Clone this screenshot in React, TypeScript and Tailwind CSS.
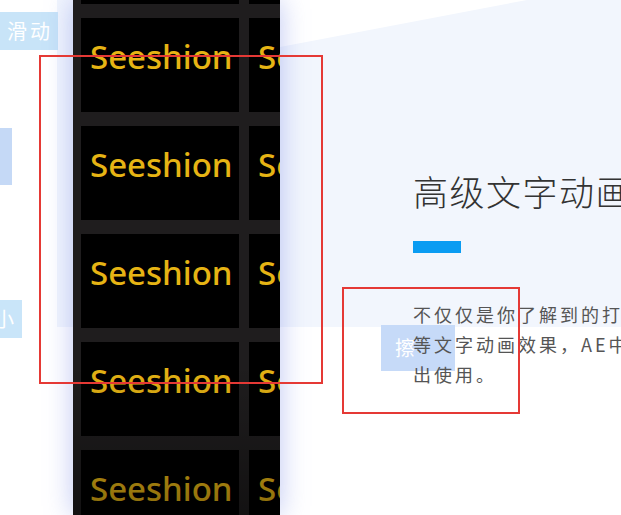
import React from 'react';

const cjk = { fontFamily: '"Noto Sans CJK SC", "Noto Sans", sans-serif' };
const latin = { fontFamily: '"Noto Sans", "Liberation Sans", Arial, sans-serif' };

const rows = [0, 1, 2, 3, 4, 5];

const GridCell: React.FC = () => (
  <div className="h-[94px] bg-black pt-[22px] pl-[9px] whitespace-nowrap">
    <span className="text-[33px] leading-none font-medium text-[#e6b414]" style={latin}>
      Seeshion
    </span>
  </div>
);

const TextGrid: React.FC = () => (
  <div className="relative w-[207px] h-[515px] shrink-0 bg-[#1f1d1e] overflow-hidden shadow-[0_0_26px_rgba(95,115,225,0.4)] z-10">
    <div className="grid grid-cols-[158px_158px] gap-x-[10px] gap-y-[14px] pl-[8px] mt-[-90px]">
      {rows.map((r) => (
        <React.Fragment key={r}>
          <GridCell />
          <GridCell />
        </React.Fragment>
      ))}
    </div>
    <div className="absolute left-0 right-0 bottom-0 h-[150px] bg-gradient-to-b from-transparent to-black/40 pointer-events-none" />
  </div>
);

const App: React.FC = () => {
  return (
    <div className="relative w-[621px] h-[515px] overflow-hidden bg-white" style={cjk}>
      {/* section background */}
      <div className="absolute left-[57px] top-0 w-[564px] h-[327px] bg-[#f2f6fd]" />
      <svg className="absolute left-0 top-0" width="621" height="60">
        <polygon points="280,0 527,0 280,47" fill="#ffffff" />
      </svg>

      <div className="relative flex h-full">
        <div className="w-[73px] shrink-0" />
        <TextGrid />
        <div className="relative flex-1 pl-[133px] pt-[171px] whitespace-nowrap">
          <h2 className="text-[35px] leading-[40px] font-light tracking-[1.5px] text-[#333333]">高级文字动画</h2>
          <div className="w-[48px] h-[12px] bg-[#0a9cf2] mt-[30px]" />
          <div className="absolute left-[101px] top-[325px] w-[74px] h-[46px] bg-[#c6daf8] flex items-center pl-[14px]">
            <span className="text-white text-[20px]">擦</span>
          </div>
          <div className="relative mt-[46px] text-[18px] leading-[30px] tracking-[3px] text-[#555555]">
            <p>不仅仅是你了解到的打字机、淡入淡出</p>
            <p>等文字动画效果，AE中的文字动画都可以导</p>
            <p>出使用。</p>
          </div>
        </div>
      </div>

      {/* floating labels */}
      <div className="absolute left-0 top-[12px] w-[58px] h-[38px] bg-[#c8e4f8] flex items-center pl-[7px]">
        <span className="text-white text-[20px] tracking-[3px] leading-none whitespace-nowrap">滑动</span>
      </div>
      <div className="absolute left-0 top-[128px] w-[12px] h-[57px] bg-[#c5d9f6]" />
      <div className="absolute left-0 top-[300px] w-[22px] h-[38px] bg-[#c9e5f9] overflow-hidden flex items-center justify-end pr-[8px]">
        <span className="shrink-0 whitespace-nowrap text-white text-[20px] leading-none">缩小</span>
      </div>

      {/* selection outlines */}
      <div className="absolute left-[39px] top-[55px] w-[284px] h-[329px] border-2 border-[#e53935] z-20" />
      <div className="absolute left-[342px] top-[287px] w-[178px] h-[127px] border-2 border-[#e53935] z-20" />
    </div>
  );
};

export default App;
